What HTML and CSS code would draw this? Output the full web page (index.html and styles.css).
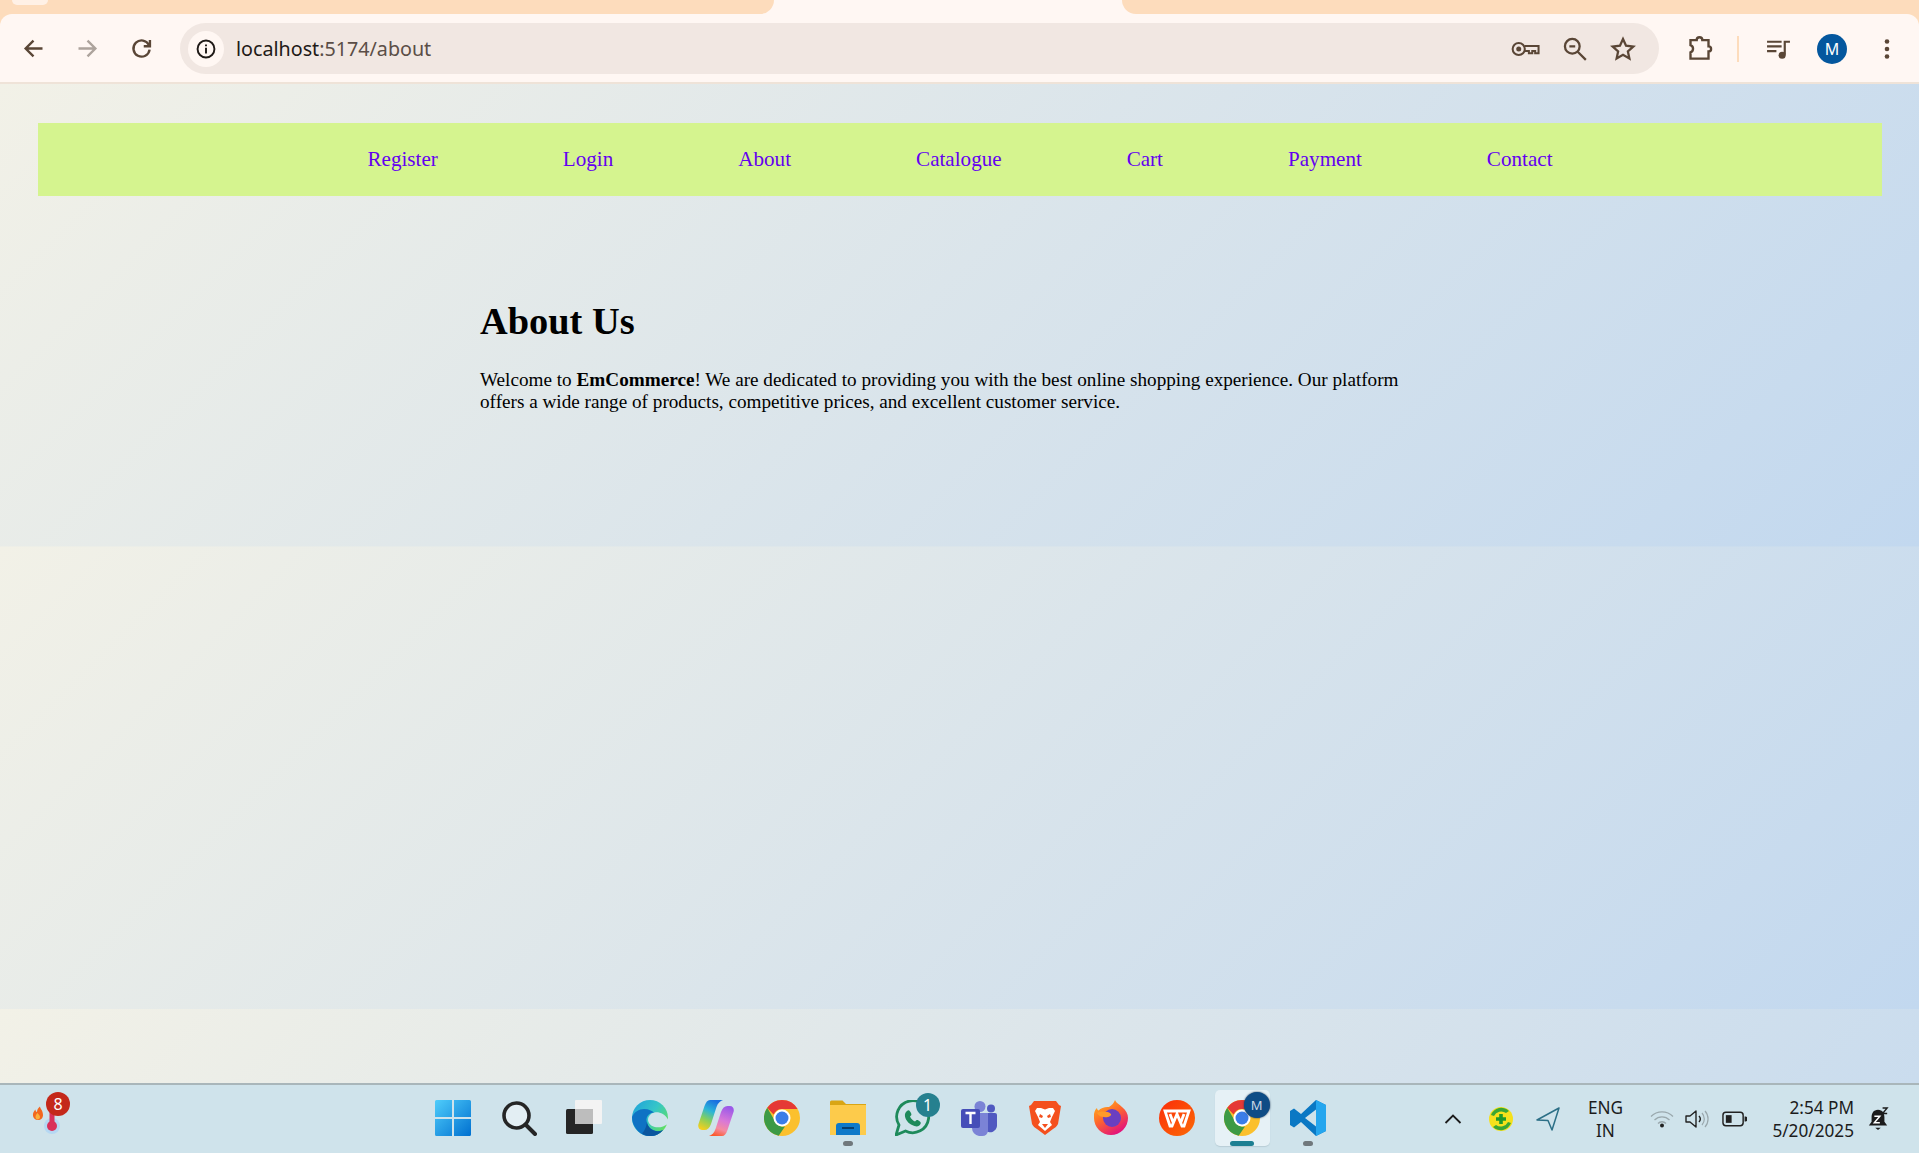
FILE: index.html
```html
<!DOCTYPE html>
<html lang="en">
<head>
<meta charset="utf-8">
<title>EmCommerce - About</title>
<link rel="stylesheet" href="styles.css">
</head>
<body>
<div class="screen">
  <header class="chrome">
    <div class="tabstrip">
      <div class="tabs-left"><span class="tab-stub"></span></div>
      <div class="tab-active"></div>
      <div class="tabs-right"></div>
    </div>
    <div class="toolbar">
      <div class="nav-buttons">
        <svg class="tb-icon" viewBox="0 0 24 24"><path d="M20 12H5M12 5l-7 7 7 7" class="st-brown"/></svg>
        <svg class="tb-icon" viewBox="0 0 24 24"><path d="M4 12h15M12 5l7 7-7 7" class="st-grey"/></svg>
        <svg class="tb-icon" viewBox="0 0 24 24"><path d="M18.6 9a7.2 7.2 0 1 0 .6 4" class="st-brown"/><path d="M19.5 4.500V10h-5.500" class="st-brown"/></svg>
      </div>
      <div class="omnibox">
        <span class="site-info">
          <svg class="info-icon" viewBox="0 0 24 24"><circle cx="12" cy="12" r="9.200" class="st-dark"/><path d="M12 10.600v6.400M12 7v2" class="st-dark"/></svg>
        </span>
        <span class="url"><span class="url-host">localhost</span>:5174/about</span>
        <span class="omni-actions">
          <svg class="omni-icon key" viewBox="0 0 30 20"><circle cx="8" cy="10" r="6.300" class="st-thick"/><circle cx="8" cy="10" r="2.600" class="fill-brown"/><path d="M14 7h14.500v7.500h-3.500v-2.500h-3v2.500h-3.500v-2.500h-4.500" class="st-thick"/></svg>
          <svg class="omni-icon" viewBox="0 0 24 24"><circle cx="9.500" cy="9.500" r="6.800" class="st-thick"/><path d="M6.800 9.500h5.400M14.500 14.500l7.500 7.500" class="st-thick"/></svg>
          <svg class="omni-icon" viewBox="0 0 24 24"><path d="M12 2.800l2.800 6.200 6.700.7-5 4.500 1.400 6.600L12 17.400l-5.900 3.400 1.400-6.600-5-4.500 6.700-.7z" class="st-thick"/></svg>
        </span>
      </div>
      <div class="tool-actions">
        <svg class="ext-icon" viewBox="0 0 24 24"><path d="M4 4.500h5.500a2.500 2.500 0 0 1 5 0H20v5.600a2.300 2.300 0 0 1 0 4.600V21H4v-5.600a3.400 3.400 0 0 0 0-6.400z" class="st-thick"/></svg>
        <span class="tool-sep"></span>
        <svg class="media-icon" viewBox="0 0 24 24"><path d="M1 5.500h14M1 10h14M1 14.500h9" class="st-brown"/><path d="M18 18V5.500H23" class="st-brown"/><circle cx="15.500" cy="18.500" r="3.400" class="fill-brown"/></svg>
        <span class="avatar">M</span>
        <svg class="menu-icon" viewBox="0 0 6 24"><circle cx="3" cy="4.500" r="2.300" class="fill-brown"/><circle cx="3" cy="12" r="2.300" class="fill-brown"/><circle cx="3" cy="19.500" r="2.300" class="fill-brown"/></svg>
      </div>
    </div>
  </header>

  <div class="viewport">
    <div class="page">
      <nav class="site-nav">
        <a href="#">Register</a>
        <a href="#">Login</a>
        <a href="#">About</a>
        <a href="#">Catalogue</a>
        <a href="#">Cart</a>
        <a href="#">Payment</a>
        <a href="#">Contact</a>
      </nav>
      <main class="about">
        <h1>About Us</h1>
        <p>Welcome to <strong>EmCommerce</strong>! We are dedicated to providing you with the best online shopping experience. Our platform offers a wide range of products, competitive prices, and excellent customer service.</p>
      </main>
    </div>
  </div>

  <footer class="taskbar">
    <div class="widget">
      <svg class="widget-icon" viewBox="0 0 40 44">
        <path d="M3 18c-.5-3 1-5 2.500-6.500 0 1.500.5 2.500 1.500 2.500 0-2 1-4 3-5.500 0 2 3 4 3 8.500 0 3-2 5-5 5s-4.500-2-5-4z" class="flame"/>
        <path d="M5.500 19c0-2 1-3 2-4 .5 1 2.500 2 2.500 4 0 1.500-1 2.500-2.300 2.500S5.500 20.500 5.500 19z" class="flame-core"/>
        <circle cx="22" cy="28" r="8" class="therm-glow"/>
        <rect x="19.500" y="4" width="5" height="24" rx="2.500" class="therm"/>
        <circle cx="22" cy="28" r="5" class="therm"/>
      </svg>
      <span class="badge badge-red">8</span>
    </div>

    <div class="task-icons">
      <span class="task-item">
        <svg class="app" viewBox="0 0 36 36"><defs><linearGradient id="win" x1="0" y1="0" x2="1" y2="1"><stop offset="0" stop-color="#4fcdfb"/><stop offset="1" stop-color="#0070d0"/></linearGradient></defs><path d="M0 1.500A1.500 1.500 0 0 1 1.500 0H17v17H0zM19 0h15.500A1.500 1.500 0 0 1 36 1.500V17H19zM0 19h17v17H1.500A1.500 1.500 0 0 1 0 34.500zM19 19h17v15.500a1.500 1.500 0 0 1-1.500 1.500H19z" fill="url(#win)"/></svg>
      </span>
      <span class="task-item">
        <svg class="app" viewBox="0 0 36 36"><circle cx="15.500" cy="15.500" r="12.500" fill="#e3eef3" stroke="#252525" stroke-width="3.600"/><path d="M24.500 24.500L34 34" stroke="#252525" stroke-width="4" stroke-linecap="round"/></svg>
      </span>
      <span class="task-item">
        <svg class="app" viewBox="0 0 36 36"><rect x="0" y="9" width="27" height="25" rx="1.500" fill="#252525"/><rect x="9" y="0" width="27" height="24" rx="1" fill="#f3f3f3"/><rect x="9" y="9" width="18" height="15" fill="#bdbdbd"/></svg>
      </span>
      <span class="task-item">
        <svg class="app" viewBox="0 0 36 36"><defs><linearGradient id="edge" x1="0" y1="0" x2="1" y2=".7"><stop offset="0" stop-color="#1f9fdc"/><stop offset=".55" stop-color="#35c6c8"/><stop offset="1" stop-color="#62e05e"/></linearGradient></defs><circle cx="18" cy="18" r="18" fill="url(#edge)"/><path d="M36 19.500C33 14 27 11.500 22.500 12.500 17.500 13.500 15 18 16.500 22 18.500 27 25 28.500 31 26.500L36 24z" fill="#cfe3eb"/><path d="M0 17c2-5 7-8 12-8 5 0 8 2 10 3.500-4 0-7 3-7.500 6.500-.3 3 1 6.500 3.500 9 3 3 8 4.500 13 2-3.500 4-8 6.500-13 6.500C8 36 0 27 0 17z" fill="#0f72c4"/><path d="M15 20c-.5 5 3 10 9 11 3 .5 6 0 7.500-1.500C28 34 23 36 18 36c-3 0-6-1-8-2.500 3-3 5-8 5-13.500z" fill="#0b569f"/></svg>
      </span>
      <span class="task-item">
        <svg class="app" viewBox="0 0 36 36"><defs><linearGradient id="cp1" x1=".6" y1="0" x2=".2" y2="1"><stop offset="0" stop-color="#1a6fe0"/><stop offset=".35" stop-color="#2bb5d8"/><stop offset=".65" stop-color="#86cf5c"/><stop offset="1" stop-color="#f7cf1c"/></linearGradient><linearGradient id="cp2" x1=".6" y1="0" x2=".3" y2="1"><stop offset="0" stop-color="#9c5ae8"/><stop offset=".45" stop-color="#d878d8"/><stop offset=".75" stop-color="#f58ba0"/><stop offset="1" stop-color="#fb5a2c"/></linearGradient></defs><path d="M12 0h13c-3 1-5 3-6.500 7L13 24c-1.500 4-3.500 6-6.500 6H4c-3 0-4.500-3-3.500-6L6.500 6C8 2 9.500 0 12 0z" fill="url(#cp1)"/><path d="M24 36H11c3-1 5-3 6.500-7L23 12c1.500-4 3.500-6 6.500-6H32c3 0 4.500 3 3.500 6l-6 18c-1.500 4-3 6-5.500 6z" fill="url(#cp2)"/></svg>
      </span>
      <span class="task-item">
        <svg class="app" viewBox="0 0 36 36"><circle cx="18" cy="18" r="18" fill="#fbc02d"/><path d="M18 0a18 18 0 0 1 15.600 9H18a9 9 0 0 0-8.400 5.600L3.200 7.700A18 18 0 0 1 18 0z" fill="#e53935"/><path d="M3.200 7.700l7 12A9 9 0 0 0 21 26.500L14.700 35.700A18 18 0 0 1 3.200 7.700z" fill="#3c9a45"/><circle cx="18" cy="18" r="8.500" fill="#fff"/><circle cx="18" cy="18" r="6.500" fill="#3b7de8"/></svg>
      </span>
      <span class="task-item has-dot">
        <svg class="app" viewBox="0 0 36 36"><path d="M0 2a1.500 1.500 0 0 1 1.500-1.500h11L16 4h20v3H0z" fill="#d9a514"/><path d="M0 5h36v30H0z" fill="#fdcb4b"/><path d="M6 35V26q0-3 3-3h18q3 0 3 3v9z" fill="#0f79c9"/><rect x="12" y="27" width="12" height="2" fill="#073f70"/></svg>
      </span>
      <span class="task-item">
        <svg class="app" viewBox="0 0 36 36"><path d="M1 35l3-10A16 16 0 1 1 10.500 31z" fill="none" stroke="#1e8a5b" stroke-width="2.800" stroke-linejoin="round"/><path d="M12 11c2-2 3 0 4 2s0 2.500-1 3.500c1 2.500 3 4 5 5 1-1 2-2 3.500-1s3 2 2 3.500c-1 2-3 3-6 2-5-1.500-8.500-5-9.500-9.500-.5-2.500.5-4.500 2-5.500z" fill="#1e8a5b"/></svg>
        <span class="badge badge-teal">1</span>
      </span>
      <span class="task-item">
        <svg class="app" viewBox="0 0 36 36"><circle cx="19" cy="6.500" r="5.500" fill="#7b83d6"/><circle cx="30" cy="8.500" r="4" fill="#5059c0"/><path d="M25 13h9a2 2 0 0 1 2 2v11a7 7 0 0 1-11 5z" fill="#5059c0"/><path d="M11 13h16v18a6 6 0 0 1-6 5h-3a8 8 0 0 1-7-8z" fill="#7b83d6"/><rect x="0" y="9" width="19" height="19" rx="2" fill="#464eb8"/><path d="M4.500 13h10M9.500 13v11" stroke="#fff" stroke-width="2.400"/></svg>
      </span>
      <span class="task-item">
        <svg class="app" viewBox="0 0 36 36"><path d="M7 1h22l3 4 2 1-3 18c-1 2-3 4-5 5l-8 6-8-6c-2-1-4-3-5-5L2 6l2-1z" fill="#f4501e"/><path d="M10 8h4l4 1.500L22 8h4l2 3-3 6-2 5 2 3-7 6-7-6 2-3-2-5-3-6z" fill="#fff"/><path d="M13 14l3 2-1 2-3-1zM23 14l-3 2 1 2 3-1zM15 24h6l-3 4z" fill="#f4501e"/></svg>
      </span>
      <span class="task-item">
        <svg class="app" viewBox="0 0 36 36"><defs><linearGradient id="ff" x1="0" y1="0" x2=".6" y2="1"><stop offset="0" stop-color="#ffc11e"/><stop offset=".5" stop-color="#ff6a2a"/><stop offset="1" stop-color="#e3147a"/></linearGradient></defs><path d="M1 14c.5-3 1.500-5 3-6 0 1 .5 2 1.500 2.500C8 8 12 6.500 16 7 19 5 21 3 22 0c1 3 4 4 7 7 4 3 6 7 6 11a17 17 0 0 1-34 0c0-1 0-3 0-4z" fill="url(#ff)"/><circle cx="19" cy="18" r="9" fill="#6a3fc0"/><path d="M4 13c4-2 11-2 14 1 1 2-4 4-7 3-3 0-5-1-7-4z" fill="#ff9a2a"/></svg>
      </span>
      <span class="task-item">
        <svg class="app" viewBox="0 0 36 36"><defs><linearGradient id="wps" x1="0" y1="0" x2="1" y2="1"><stop offset="0" stop-color="#fb2d09"/><stop offset="1" stop-color="#fc6a06"/></linearGradient></defs><circle cx="18" cy="18" r="18" fill="url(#wps)"/><path d="M6 11h24l-5 15h-2l-5-12-5 12h-2zM11 14l3 8M25 14l-3 8" fill="none" stroke="#fff" stroke-width="2.800"/></svg>
      </span>
      <span class="task-item is-open">
        <svg class="app" viewBox="0 0 36 36"><circle cx="18" cy="18" r="18" fill="#fbc02d"/><path d="M18 0a18 18 0 0 1 15.600 9H18a9 9 0 0 0-8.400 5.600L3.200 7.700A18 18 0 0 1 18 0z" fill="#e53935"/><path d="M3.200 7.700l7 12A9 9 0 0 0 21 26.500L14.700 35.700A18 18 0 0 1 3.200 7.700z" fill="#3c9a45"/><circle cx="18" cy="18" r="8.500" fill="#fff"/><circle cx="18" cy="18" r="6.500" fill="#3b7de8"/></svg>
        <span class="badge badge-navy">M</span>
      </span>
      <span class="task-item has-dot">
        <svg class="app" viewBox="0 0 36 36"><path d="M26 0l10 5v26l-10 5-15-14-7 5.500L0 25V11l4-2.500L11 14z" fill="#0a78c4"/><path d="M26 0l10 5v26l-10 5z" fill="#25a6ee"/><path d="M26 9.500L15 18l11 8.500z" fill="#cfe3eb"/></svg>
      </span>
    </div>

    <div class="tray">
      <svg class="tray-chevron" viewBox="0 0 18 10"><path d="M1.500 9L9 1.500 16.500 9" class="st-tray"/></svg>
      <svg class="tray-shield" viewBox="0 0 24 24"><circle cx="12" cy="12" r="12" fill="#f5e11c"/><path d="M2 8a11 11 0 0 1 18-4l-3 2a8 8 0 0 0-12 3zM22 16a11 11 0 0 1-18 4l3-2a8 8 0 0 0 12-3z" fill="#3aa635"/><path d="M12 7v10M7 12h10" stroke="#1f9a2a" stroke-width="3.600"/></svg>
      <svg class="tray-loc" viewBox="0 0 24 24"><path d="M23 1L1 13l11 .500L16 23z" fill="none" stroke="#2c6f86" stroke-width="1.500" stroke-linejoin="round"/></svg>
      <div class="lang"><span>ENG</span><span>IN</span></div>
      <svg class="tray-wifi" viewBox="0 0 24 20"><path d="M1 7.500a15.500 15.500 0 0 1 22 0M4.500 11a10.500 10.500 0 0 1 15 0" class="st-wifi"/><path d="M8 14.500a5.500 5.500 0 0 1 8 0" class="st-wifi"/><circle cx="12" cy="16.500" r="2" fill="#222"/></svg>
      <svg class="tray-vol" viewBox="0 0 24 20"><path d="M1 7v6h4l6 5V2L5 7z" fill="none" stroke="#222" stroke-width="1.400" stroke-linejoin="round"/><path d="M14 7a4.500 4.500 0 0 1 0 6" fill="none" stroke="#222" stroke-width="1.400"/><path d="M17 4a9 9 0 0 1 0 12M20 2a12 12 0 0 1 0 16" fill="none" stroke="#9aa8ad" stroke-width="1.200"/></svg>
      <svg class="tray-batt" viewBox="0 0 26 16"><rect x="1" y="1" width="21" height="14" rx="3" fill="none" stroke="#222" stroke-width="1.500"/><rect x="4" y="4" width="6" height="8" fill="#222"/><path d="M23.500 5.500h1a1.500 1.500 0 0 1 0 5h-1z" fill="#222"/></svg>
      <div class="clock"><span>2:54 PM</span><span>5/20/2025</span></div>
      <svg class="tray-bell" viewBox="0 0 24 26"><path d="M12 3c5 0 7 4 7 8v5l3 4H2l3-4v-5c0-4 2-8 7-8z" fill="#1c1c1c"/><path d="M9 22.500h6l-3 2.500z" fill="#1c1c1c"/><path d="M8 10h6l-6 7h6" fill="none" stroke="#fff" stroke-width="1.600"/><path d="M17 1h5l-5 6h5" fill="none" stroke="#1c1c1c" stroke-width="1.500"/></svg>
    </div>
  </footer>
</div>
</body>
</html>
```

FILE: styles.css
```css
* { box-sizing: border-box; }

html, body {
  margin: 0;
  height: 100%;
  overflow: hidden;
}

.screen {
  display: flex;
  flex-direction: column;
  width: 1919px;
  height: 1153px;
  overflow: hidden;
}

/* ---------- browser chrome ---------- */
.chrome { flex: none; background: #fddcbc; }

.tabstrip {
  display: flex;
  height: 14px;
  background: #fff7f3;
}

.tabs-left {
  width: 774px;
  background: #fddcbc;
  border-bottom-right-radius: 14px;
}

.tab-stub {
  display: block;
  width: 36px;
  height: 5px;
  margin-left: 12px;
  background: #fff1e6;
  border-radius: 0 0 8px 8px;
}

.tab-active { width: 348px; background: #fff7f3; }

.tabs-right {
  flex: 1;
  background: #fddcbc;
  border-bottom-left-radius: 14px;
}

.toolbar {
  display: flex;
  align-items: center;
  height: 70px;
  padding: 1px 0 0;
  background: #fff7f3;
  border-bottom: 2px solid #efe3d8;
  border-radius: 12px 12px 0 0;
}

.nav-buttons {
  display: flex;
  align-items: center;
  gap: 27px;
  width: 180px;
  padding-left: 19.500px;
}

.tb-icon { width: 27px; height: 27px; flex: none; }

.st-brown, .st-grey, .st-dark, .st-thick {
  fill: none;
  stroke-width: 2.100;
}
.st-brown { stroke: #5a4636; }
.st-grey { stroke: #ada39c; }
.st-dark { stroke: #1f1a17; }
.st-thick { stroke: #5a4636; }
.fill-brown { fill: #5a4636; }

.omnibox {
  display: flex;
  align-items: center;
  width: 1479px;
  height: 51px;
  padding: 0 23px 0 8px;
  background: #f1e7e2;
  border-radius: 26px;
}

.site-info {
  display: flex;
  align-items: center;
  justify-content: center;
  width: 36px;
  height: 36px;
  background: #fff7f3;
  border-radius: 50%;
}

.info-icon { width: 22px; height: 22px; }

.url {
  margin-left: 12px;
  font: 19.700px "Noto Sans", "Open Sans", sans-serif;
  color: #5b4e47;
}

.url-host { color: #1f1a17; }

.omni-actions {
  display: flex;
  align-items: center;
  gap: 22px;
  margin-left: auto;
}

.omni-icon { width: 26px; height: 26px; }
.omni-icon.key { width: 29px; height: 20px; }

.tool-actions {
  display: flex;
  align-items: center;
  flex: 1;
  padding-left: 27px;
}

.ext-icon { width: 27px; height: 27px; }

.tool-sep {
  width: 2px;
  height: 26px;
  margin: 0 27px 0 24px;
  background: #fddcbc;
}

.media-icon { width: 25px; height: 25px; }

.avatar {
  display: flex;
  align-items: center;
  justify-content: center;
  width: 30px;
  height: 30px;
  margin-left: 26px;
  background: #04579e;
  border-radius: 50%;
  color: #fff;
  font: 16px "Noto Sans", sans-serif;
}

.menu-icon { width: 6px; height: 24px; margin-left: 37px; }

/* ---------- page ---------- */
.viewport {
  flex: 1;
  min-height: 0;
  overflow: hidden;
  background: linear-gradient(135deg, #f2f1e7 0%, #c2d8ef 100%) 0 0 / 1919px 462.500px repeat-y;
}

.page {
  padding: 38.500px 37px 0 38px;
}

.site-nav {
  display: flex;
  justify-content: center;
  align-items: center;
  gap: 125px;
  height: 73px;
  padding-top: 1px;
  background: #d5f48f;
}

.site-nav a {
  font: 21.120px/1 "Liberation Serif", serif;
  color: #6400f0;
  text-decoration: none;
}

.about {
  width: 960px;
  margin: 0 auto;
  padding-top: 103px;
}

.about h1 {
  margin: 0;
  font: bold 38.400px/1.15 "Liberation Serif", serif;
  color: #000;
}

.about p {
  margin: 26px 0 0;
  font: 19.200px/22px "Liberation Serif", serif;
  color: #000;
}

/* ---------- taskbar ---------- */
.taskbar {
  position: relative;
  flex: none;
  height: 70px;
  background: #cfe3eb;
  border-top: 2px solid #a9b6ba;
}

.widget {
  position: absolute;
  left: 28px;
  top: 7px;
  width: 44px;
  height: 52px;
}

.widget-icon { position: absolute; left: 2px; top: 6px; width: 40px; height: 44px; }
.flame { fill: #f2671f; }
.flame-core { fill: #fbb03b; }
.therm { fill: #d9305a; }
.therm-glow { fill: #b5d8f3; }

.badge {
  position: absolute;
  display: flex;
  align-items: center;
  justify-content: center;
  border-radius: 50%;
  color: #fff;
  font: 16px "Noto Sans", sans-serif;
}

.badge-red { left: 18px; top: 0; width: 24px; height: 24px; background: #c4281a; }
.badge-teal { left: 35px; top: 8px; width: 24px; height: 24px; background: #26808f; }
.badge-navy { left: 29px; top: 2px; width: 26px; height: 26px; background: #0f4c86; color: #cbd9e6; font-size: 13px; box-shadow: 0 0 2px #1c3350; }

.task-icons {
  position: absolute;
  left: 420px;
  top: 0;
  display: flex;
  height: 66px;
}

.task-item {
  position: relative;
  display: flex;
  align-items: center;
  justify-content: center;
  width: 65.800px;
  height: 66px;
}

.app { width: 36px; height: 36px; }

.task-item.has-dot::after,
.task-item.is-open::after {
  content: "";
  position: absolute;
  left: 50%;
  bottom: 5px;
  width: 10px;
  height: 5px;
  margin-left: -5px;
  background: #70787c;
  border-radius: 3px;
}

.task-item.is-open {
  background: #e6f1f6;
  box-shadow: 0 1px 1px #b8cdd6;
  border-radius: 5px;
  width: 55.800px;
  height: 56px;
  margin: 5px 5px 0;
}

.task-item.is-open::after {
  width: 24px;
  margin-left: -12px;
  bottom: 0;
  background: #1d7f92;
}

.tray {
  position: absolute;
  left: 1444px;
  right: 0;
  top: 0;
  height: 68px;
  display: flex;
  align-items: center;
  color: #1c1c1c;
  font: 17.200px/23px "Noto Sans", sans-serif;
}

.tray-chevron { width: 18px; height: 10px; }
.st-tray { fill: none; stroke: #1c1c1c; stroke-width: 1.800; }
.tray-shield { width: 24px; height: 24px; margin-left: 26.500px; }
.tray-loc { width: 24px; height: 24px; margin-left: 23px; }

.lang {
  display: flex;
  flex-direction: column;
  align-items: center;
  width: 60px;
  margin-left: 16px;
}

.tray-wifi { width: 24px; height: 20px; margin-left: 14.500px; }
.st-wifi { fill: none; stroke: #9aa8ad; stroke-width: 1.300; }
.tray-vol { width: 24px; height: 20px; margin-left: 11px; }
.tray-batt { width: 25px; height: 16px; margin-left: 13px; }

.clock {
  display: flex;
  flex-direction: column;
  align-items: flex-end;
  width: 103px;
  margin-left: 4px;
}

.tray-bell { width: 22px; height: 26px; margin-left: 13px; }
```
